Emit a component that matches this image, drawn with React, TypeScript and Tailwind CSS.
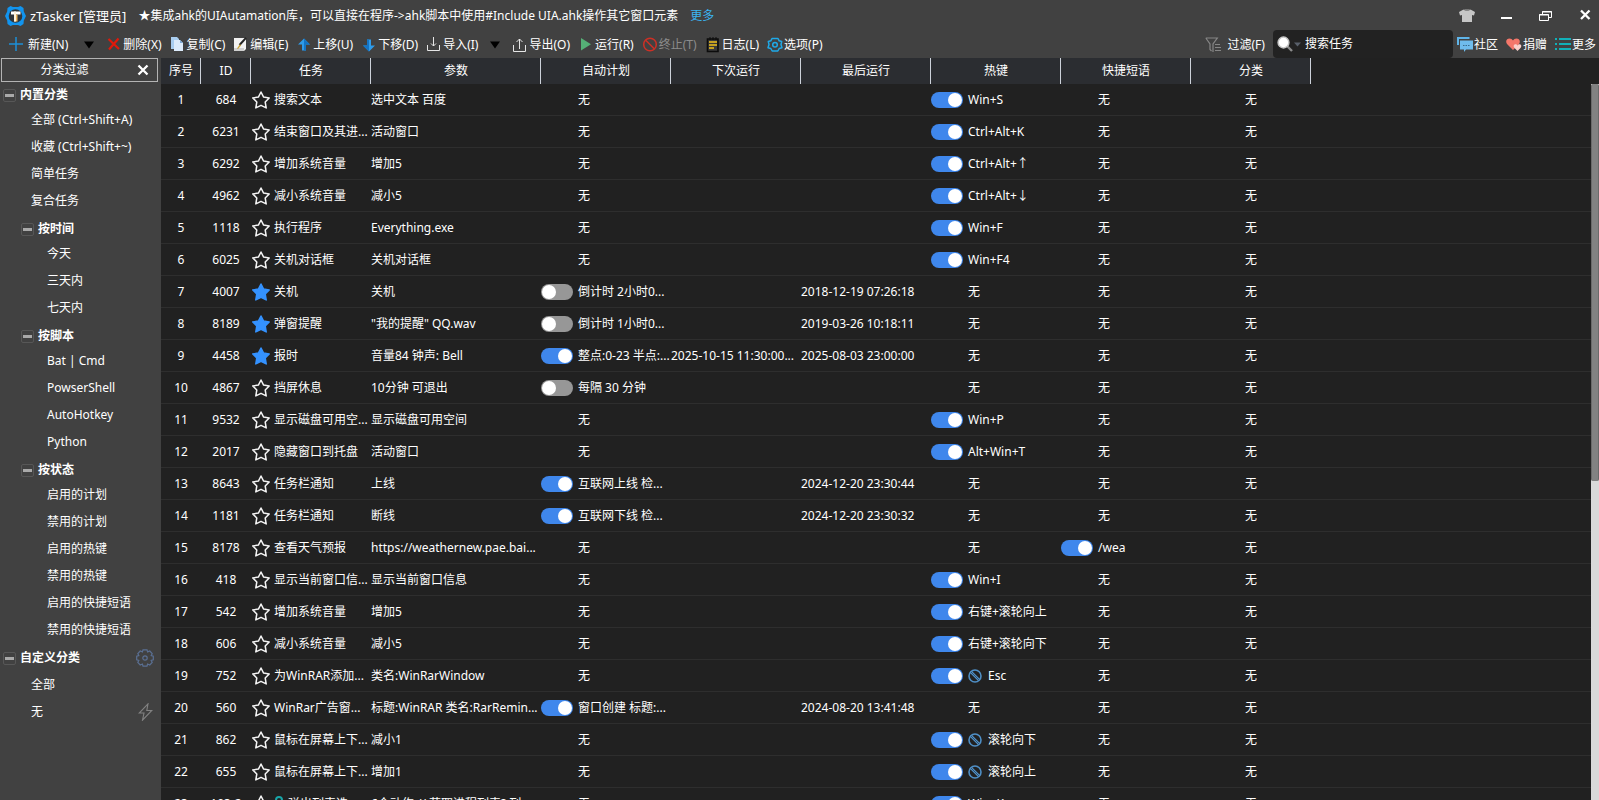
import { useState } from 'react';
import type { ReactNode } from 'react';

type Cell = string | { on: boolean; text: string; blocked?: boolean };

interface Task {
	id: string;
	name: string;
	params: string;
	fav?: boolean;
	locked?: boolean;
	plan?: Cell;
	next?: string;
	last?: string;
	hotkey?: Cell;
	phrase?: Cell;
}

const on = (text: string, blocked = false): Cell => ({ on: true, text, blocked });
const off = (text: string): Cell => ({ on: false, text });

const TASKS: Task[] = [
	{ id: '684', name: '搜索文本', params: '选中文本 百度', hotkey: on('Win+S') },
	{ id: '6231', name: '结束窗口及其进...', params: '活动窗口', hotkey: on('Ctrl+Alt+K') },
	{ id: '6292', name: '增加系统音量', params: '增加5', hotkey: on('Ctrl+Alt+↑') },
	{ id: '4962', name: '减小系统音量', params: '减小5', hotkey: on('Ctrl+Alt+↓') },
	{ id: '1118', name: '执行程序', params: 'Everything.exe', hotkey: on('Win+F') },
	{ id: '6025', name: '关机对话框', params: '关机对话框', hotkey: on('Win+F4') },
	{ id: '4007', name: '关机', params: '关机', fav: true, plan: off('倒计时 2小时0...'), last: '2018-12-19 07:26:18' },
	{ id: '8189', name: '弹窗提醒', params: '"我的提醒" QQ.wav', fav: true, plan: off('倒计时 1小时0...'), last: '2019-03-26 10:18:11' },
	{ id: '4458', name: '报时', params: '音量84 钟声: Bell', fav: true, plan: on('整点:0-23 半点:...'), next: '2025-10-15 11:30:00...', last: '2025-08-03 23:00:00' },
	{ id: '4867', name: '挡屏休息', params: '10分钟 可退出', plan: off('每隔 30 分钟') },
	{ id: '9532', name: '显示磁盘可用空...', params: '显示磁盘可用空间', hotkey: on('Win+P') },
	{ id: '2017', name: '隐藏窗口到托盘', params: '活动窗口', hotkey: on('Alt+Win+T') },
	{ id: '8643', name: '任务栏通知', params: '上线', plan: on('互联网上线 检...'), last: '2024-12-20 23:30:44' },
	{ id: '1181', name: '任务栏通知', params: '断线', plan: on('互联网下线 检...'), last: '2024-12-20 23:30:32' },
	{ id: '8178', name: '查看天气预报', params: 'https://weathernew.pae.bai...', phrase: on('/wea') },
	{ id: '418', name: '显示当前窗口信...', params: '显示当前窗口信息', hotkey: on('Win+I') },
	{ id: '542', name: '增加系统音量', params: '增加5', hotkey: on('右键+滚轮向上') },
	{ id: '606', name: '减小系统音量', params: '减小5', hotkey: on('右键+滚轮向下') },
	{ id: '752', name: '为WinRAR添加...', params: '类名:WinRarWindow', hotkey: on('Esc', true) },
	{ id: '560', name: 'WinRar广告窗...', params: '标题:WinRAR 类名:RarRemin...', plan: on('窗口创建 标题:...'), last: '2024-08-20 13:41:48' },
	{ id: '862', name: '鼠标在屏幕上下...', params: '减小1', hotkey: on('滚轮向下', true) },
	{ id: '655', name: '鼠标在屏幕上下...', params: '增加1', hotkey: on('滚轮向上', true) },
	{ id: '103-2', name: '弹出列表选...', params: '6个动作 // 获取进程列表? 列...', locked: true, hotkey: on('Win+K') },
];

const COLUMNS = [
	{ label: '序号', width: 'w-10' },
	{ label: 'ID', width: 'w-[50px]' },
	{ label: '任务', width: 'w-[120px]' },
	{ label: '参数', width: 'w-[170px]' },
	{ label: '自动计划', width: 'w-[130px]' },
	{ label: '下次运行', width: 'w-[130px]' },
	{ label: '最后运行', width: 'w-[130px]' },
	{ label: '热键', width: 'w-[130px]' },
	{ label: '快捷短语', width: 'w-[130px]' },
	{ label: '分类', width: 'w-[120px]' },
];

const BUILTIN_GROUPS = [
	{ label: '按时间', items: ['今天', '三天内', '七天内'] },
	{ label: '按脚本', items: ['Bat | Cmd', 'PowserShell', 'AutoHotkey', 'Python'] },
	{ label: '按状态', items: ['启用的计划', '禁用的计划', '启用的热键', '禁用的热键', '启用的快捷短语', '禁用的快捷短语'] },
];

export default function App() {
	return (
		<div className="flex h-screen flex-col overflow-hidden bg-[#414141] font-['Noto_Sans','Noto_Sans_CJK_SC',sans-serif] text-xs leading-4 whitespace-nowrap text-white">
			<TitleBar />
			<Toolbar />
			<div className="flex min-h-0 flex-1">
				<Sidebar />
				<TaskList />
			</div>
		</div>
	);
}

function TitleBar() {
	return (
		<header className="flex h-[30px] shrink-0 items-center pt-0.5 pr-2 pl-[5px]">
			<LogoIcon />
			<h1 className="ml-1 text-[13px]">zTasker [管理员]</h1>
			<p className="ml-3">★集成ahk的UIAutamation库，可以直接在程序-&gt;ahk脚本中使用#Include UIA.ahk操作其它窗口元素</p>
			<a href="#more" className="ml-3 text-[#3bb4f2]">更多</a>
			<div className="ml-auto flex items-center gap-6">
				<button aria-label="换肤">
					<svg width="16" height="14" viewBox="0 0 16 14" fill="#c6c6c6">
						<path d="M4.5.5 0 3l1 3.500 2-.5V13h10V6l2 .5L16 3 11.500.5C10.500 2 5.500 2 4.500.5Z" />
						<path d="M5 .3h6C10 2.500 6 2.500 5 .3Z" fill="#8b8b8b" />
					</svg>
				</button>
				<button aria-label="最小化">
					<svg width="16" height="14" viewBox="0 0 16 14"><path d="M2 8h11v2H2z" fill="#fff" /></svg>
				</button>
				<button aria-label="还原">
					<svg width="14" height="14" viewBox="0 0 14 14" fill="none" stroke="#fff">
						<path d="M3.500 5V2.500h9v6H10M3 3h10M.5 5.500h9v6h-9zM0 6h10" />
					</svg>
				</button>
				<button aria-label="关闭">
					<svg width="14" height="14" viewBox="0 0 14 14" stroke="#fff" strokeWidth="2.300"><path d="m4 1.500 8.500 8.500M12.500 1.500 4 10" /></svg>
				</button>
			</div>
		</header>
	);
}

function Tool({ icon, children, disabled }: { icon: ReactNode; children: ReactNode; disabled?: boolean }) {
	return (
		<button disabled={disabled} className="flex items-center gap-px disabled:text-[#8c8c8c]">
			{icon}
			{children}
		</button>
	);
}

function DropArrow({ label, tight }: { label: string; tight?: boolean }) {
	return (
		<button aria-label={label} className={tight ? 'px-1' : 'pr-1 pl-2'}>
			<svg width="10" height="8" viewBox="0 0 10 8"><path d="M0 .5h10L5 7.500z" fill="#000" /></svg>
		</button>
	);
}

function Toolbar() {
	return (
		<div className="flex h-7 shrink-0 items-center pr-[3px] pl-2">
			<div className="flex items-center gap-2 pt-0.5">
				<Tool
					icon={
						<svg width="19" height="16" viewBox="0 0 19 16" stroke="#1c8fd6" strokeWidth="1.500"><path d="M8 0v14M1 7h14" /></svg>
					}
				>
					新建(N)
				</Tool>
				<DropArrow label="新建菜单" />
				<Tool
					icon={
						<svg width="16" height="16" viewBox="0 0 16 16" stroke="#e0190b" strokeWidth="2.200"><path d="m2.500 2 10.500 10M12.500 1.500 3 12.500" /></svg>
					}
				>
					删除(X)
				</Tool>
				<Tool
					icon={
						<svg width="16" height="16" viewBox="0 0 16 16">
							<path d="M1 0h6l2 2v10H1z" fill="#a9cdf0" />
							<path d="M4 3h6l3 3v8H4z" fill="#dcebfb" />
							<path d="M10 3v3h3z" fill="#7fa9d6" />
						</svg>
					}
				>
					复制(C)
				</Tool>
				<Tool
					icon={
						<svg width="16" height="16" viewBox="0 0 16 16">
							<path d="M1 1h12v11l-2 2H1z" fill="#f2f2f2" />
							<path d="M1 11h10v3H1z" fill="#cfcfcf" />
							<path d="M13 .8 6.500 8" stroke="#222" strokeWidth="2" />
							<path d="m7 7-3 4.500 1 .5 3-3.500" fill="#c8a23a" />
						</svg>
					}
				>
					编辑(E)
				</Tool>
				<Tool icon={<ArrowIcon />}>上移(U)</Tool>
				<Tool icon={<ArrowIcon down />}>下移(D)</Tool>
				<Tool
					icon={
						<svg width="16" height="16" viewBox="0 0 16 16" fill="none" stroke="#e6e6e6"><path d="M1.500 8v5.500h12V8M7.500 0v9M5 6.500 7.500 9 10 6.500" /></svg>
					}
				>
					导入(I)
				</Tool>
				<DropArrow label="导入菜单" tight />
				<Tool
					icon={
						<svg width="16" height="16" viewBox="0 0 16 16" fill="none" stroke="#e6e6e6"><path d="M1.500 8v6.500h12V8M7.500 12V2M4.500 5l3-3 3 3" /></svg>
					}
				>
					导出(O)
				</Tool>
				<Tool
					icon={
						<svg width="16" height="16" viewBox="0 0 16 16"><path d="M3 1 13 7.300 3 13.500z" fill="#55b076" /></svg>
					}
				>
					运行(R)
				</Tool>
				<Tool
					disabled
					icon={
						<svg width="16" height="16" viewBox="0 0 16 16" fill="none" stroke="#cc3026" strokeWidth="1.500">
							<circle cx="8" cy="7.500" r="6.300" />
							<path d="m3.500 3 9 9" />
						</svg>
					}
				>
					终止(T)
				</Tool>
				<Tool
					icon={
						<svg width="16" height="16" viewBox="0 0 16 16">
							<path d="M2.500 2h10.500v12.500H2.500z" fill="#3a3a3a" stroke="#0c0c0c" strokeWidth="1.600" />
							<path d="M5 0v3M8 0v3M11 0v3" stroke="#0c0c0c" />
							<path d="M4 5h8M4 8h8M4 11h5" stroke="#f2c21a" strokeWidth="1.400" />
						</svg>
					}
				>
					日志(L)
				</Tool>
				<Tool
					icon={
						<svg width="16" height="16" viewBox="0 0 16 16" fill="none" stroke="#1fa9e8" strokeWidth="1.500" strokeLinejoin="round">
							<path d="M5 1.500h6l1.200 2.300 2.500.7L14 7.500l1 3.200-2.800.8-1.400 2.500H5.200l-1.400-2.500L1 10.700l1-3.200-.7-3 2.500-.7z" />
							<circle cx="8" cy="7.700" r="2.300" />
						</svg>
					}
				>
					选项(P)
				</Tool>
			</div>

			<div className="ml-auto flex h-full items-center">
				<button className="flex items-center gap-1.5 pt-0.5">
					<svg width="17" height="16" viewBox="0 0 17 16" fill="none" stroke="#868686" strokeWidth="1.200">
						<path d="M.8 1h11.500L8 7v8M.8 1 5 7v5.500l1.500 1.500M10 7.500h5M10 10.500h6M10 13.500h6" />
					</svg>
					过滤(F)
				</button>
				<div className="ml-2 flex h-full w-[180px] items-center rounded bg-[#222] pl-1">
					<svg width="16" height="16" viewBox="0 0 16 16">
						<path d="m10 10 5 5" stroke="#8c8c8c" strokeWidth="2.400" />
						<circle cx="6.500" cy="6.500" r="5.400" fill="#fff" stroke="#c6c6c6" strokeWidth="1.500" />
					</svg>
					<svg width="7" height="5" viewBox="0 0 7 5" className="ml-px"><path d="M0 .5h7l-3.500 4z" fill="#59606b" /></svg>
					<input aria-label="搜索任务" placeholder="搜索任务" className="ml-1 min-w-0 flex-1 bg-transparent outline-none placeholder:text-white" />
				</div>
				<div className="ml-1 flex gap-2 pt-0.5">
					<Tool
						icon={
							<svg width="16" height="16" viewBox="0 0 16 16">
								<path d="M1 8V1h11.500" fill="none" stroke="#5fb4e8" strokeWidth="2" />
								<path d="M3 3.500h13v9H9L7 15v-2.500H3z" fill="#6fbcec" />
								<path d="M6 8.500h7" stroke="#3b6a8a" strokeDasharray="1.500 1" />
							</svg>
						}
					>
						社区
					</Tool>
					<Tool
						icon={
							<svg width="16" height="16" viewBox="0 0 16 16">
								<path d="M7 13 1 7C-1 4 1 1.500 3.500 1.500c1.600 0 2.700.8 3.500 2 .8-1.200 1.900-2 3.500-2C13 1.500 15 4 13 7z" fill="#f4776a" />
								<path d="m11.500 14-3.200-3.200C7 9 8 7.300 9.500 7.300c.9 0 1.500.5 2 1.200.5-.7 1.100-1.200 2-1.200 1.500 0 2.500 1.700 1.200 3.500z" fill="#fbd0ca" />
							</svg>
						}
					>
						捐赠
					</Tool>
					<Tool
						icon={
							<svg width="16" height="16" viewBox="0 0 16 16" stroke="#12b0b8" strokeWidth="2"><path d="M0 2h2M4 2h12M0 7h2M4 7h12M0 12h2M4 12h12" /></svg>
						}
					>
						更多
					</Tool>
				</div>
			</div>
		</div>
	);
}

function Heading({ label, nested, children }: { label: string; nested?: boolean; children?: ReactNode }) {
	return (
		<div className={`flex h-[26px] items-center font-bold ${nested ? 'pl-[21px]' : 'pl-[3px]'}`}>
			<button aria-label={`折叠 ${label}`} className="flex size-[13px] items-center justify-center rounded-[2px] border border-[#575757]">
				<span className="h-[3px] w-[9px] bg-[#a9a9a9]" />
			</button>
			<span className="ml-1">{label}</span>
			{children}
		</div>
	);
}

function Item({ label, nested, children }: { label: string; nested?: boolean; children?: ReactNode }) {
	return (
		<li className={`flex h-[27px] items-center ${nested ? 'pl-[47px]' : 'pl-[31px]'}`}>
			<a href="#filter">{label}</a>
			{children}
		</li>
	);
}

function Sidebar() {
	return (
		<aside className="w-[161px] shrink-0 overflow-hidden">
			<div className="mr-[3px] ml-px flex h-6 items-center border border-[#b4b4b4]">
				<span className="flex-1 pr-2.5 text-center">分类过滤</span>
				<button aria-label="关闭分类过滤" className="mr-2">
					<svg width="12" height="12" viewBox="0 0 12 12" stroke="#fff" strokeWidth="2.300"><path d="m1.500 1.500 9 9M10.500 1.500l-9 9" /></svg>
				</button>
			</div>

			<nav>
				<Heading label="内置分类" />
				<ul className="-mt-0.5 mb-0.5">
					<Item label="全部 (Ctrl+Shift+A)" />
					<Item label="收藏 (Ctrl+Shift+~)" />
					<Item label="简单任务" />
					<Item label="复合任务" />
				</ul>
				{BUILTIN_GROUPS.map((group) => (
					<div key={group.label}>
						<Heading label={group.label} nested />
						<ul className="-mt-0.5 mb-0.5">
							{group.items.map((item) => (
								<Item key={item} label={item} nested />
							))}
						</ul>
					</div>
				))}
				<Heading label="自定义分类">
					<button aria-label="分类设置" className="mr-[7px] ml-auto">
						<svg width="18" height="18" viewBox="0 0 18 18" fill="none" stroke="#5a6f92" strokeWidth="1.200">
							<path d="M7 .8h4l.6 2.100L13.800 2l2.400 2.600-1 2 2.100.6v3.600l-2.100.6 1 2-2.400 2.600-2.200-1-.6 2.200H7l-.6-2.200-2.200 1-2.400-2.600 1-2-2.100-.6V7.200l2.100-.6-1-2L4.200 2l2.200.9z" />
							<circle cx="9" cy="9" r="2.200" />
						</svg>
					</button>
				</Heading>
				<ul>
					<Item label="全部" />
					<Item label="无">
						<button aria-label="快速分类" className="mr-2 ml-auto">
							<svg width="15" height="18" viewBox="0 0 15 18" fill="none" stroke="#828282" strokeWidth="1.100"><path d="M10 .8 1.200 10H6l-1.500 7.200L13.800 7.500H8.800z" /></svg>
						</button>
					</Item>
				</ul>
			</nav>
		</aside>
	);
}

function TaskList() {
	return (
		<main className="flex min-w-0 flex-1 bg-[#212121]">
			<div className="min-w-0 flex-1 overflow-hidden">
				<table className="w-full table-fixed border-collapse">
					<colgroup>
						{COLUMNS.map((col) => (
							<col key={col.label} className={col.width} />
						))}
						<col />
					</colgroup>
					<thead>
						<tr className="h-[26px]">
							{COLUMNS.map((col) => (
								<th key={col.label} className="bg-[#2b2d31] p-0 font-normal shadow-[inset_-1px_0_0_#cdd2da]">
									{col.label}
								</th>
							))}
							<td />
						</tr>
					</thead>
					<tbody>
						{TASKS.map((task, i) => (
							<TaskRow key={task.id} task={task} index={i + 1} />
						))}
					</tbody>
				</table>
			</div>
			<div className="mt-[26px] w-2 shrink-0 bg-[#d9d9d9]">
				<div className="h-[397px] rounded-xs border-x border-[#6a6a6a] bg-[#828282]" />
			</div>
		</main>
	);
}

function TaskRow({ task, index }: { task: Task; index: number }) {
	const [fav, setFav] = useState(!!task.fav);

	return (
		<tr className="h-8 shadow-[inset_0_-1px_0_#2e2e2e]">
			<td className="p-0 text-center">{index}</td>
			<td className="p-0 text-center">{task.id}</td>
			<td className="p-0">
				<div className="flex items-center overflow-hidden pl-px">
					<button aria-label={`收藏 ${task.name}`} aria-pressed={fav} onClick={() => setFav(!fav)} className="mr-1 shrink-0">
						<StarIcon filled={fav} />
					</button>
					{task.locked && <LockIcon />}
					{task.name}
				</div>
			</td>
			<td className="overflow-hidden p-0">{task.params}</td>
			<td className="p-0">
				<SwitchCell cell={task.plan} label={`自动计划 ${task.name}`} />
			</td>
			<td className="p-0">{task.next}</td>
			<td className="p-0">{task.last}</td>
			<td className="p-0">
				<SwitchCell cell={task.hotkey} label={`热键 ${task.name}`} />
			</td>
			<td className="p-0">
				<SwitchCell cell={task.phrase} label={`快捷短语 ${task.name}`} />
			</td>
			<td className="p-0 text-center">无</td>
			<td />
		</tr>
	);
}

function SwitchCell({ cell = '无', label }: { cell?: Cell; label: string }) {
	if (typeof cell === 'string') return <div className="pl-[37px]">{cell}</div>;
	return (
		<div className="flex items-center">
			<input
				type="checkbox"
				role="switch"
				aria-label={label}
				defaultChecked={cell.on}
				className="mr-[5px] flex h-4 w-8 shrink-0 appearance-none items-center rounded-full bg-[#979797] px-px before:size-3.5 before:rounded-full before:bg-white checked:bg-[#3f87ec] checked:before:ml-auto"
			/>
			{cell.blocked && (
				<svg width="14" height="14" viewBox="0 0 14 14" fill="none" className="mr-1.5 shrink-0">
					<circle cx="7" cy="7" r="6" stroke="#4f8fc6" strokeWidth="1.600" />
					<path d="m3 3 8 8" stroke="#4f8fc6" strokeWidth="2.600" />
					<path d="m3 3 8 8" stroke="#24384a" strokeWidth=".7" />
				</svg>
			)}
			{cell.text}
		</div>
	);
}

function StarIcon({ filled }: { filled: boolean }) {
	return (
		<svg width="18" height="18" viewBox="0 0 18 18" strokeWidth="1.500" strokeLinejoin="round" fill={filled ? '#3492ff' : 'none'} stroke={filled ? '#3492ff' : '#f4f4f4'}>
			<path d="m9 1 2.600 5.100 5.600.8-4 4.100 1 5.900L9 14.300l-5.200 2.600 1-5.900-4-4.100 5.600-.8z" />
		</svg>
	);
}

function LockIcon() {
	return (
		<svg width="10" height="16" viewBox="0 0 10 16" className="mr-1 shrink-0">
			<path d="M2 8V4a3 3 0 0 1 6 0v4" fill="none" stroke="#18a5a8" strokeWidth="2" />
			<path d="M0 7h10v8H0z" fill="#18a5a8" />
		</svg>
	);
}

function ArrowIcon({ down }: { down?: boolean }) {
	return (
		<svg width="16" height="16" viewBox="0 0 16 16" className={down ? 'rotate-180' : ''}>
			<path d="M8 1.500 2 7.500h4v6h4v-6h4z" fill="#2e9bea" />
			<path d="M8 1.500v12h2v-6h4z" fill="#1474c4" />
		</svg>
	);
}

function LogoIcon() {
	return (
		<svg width="21" height="22" viewBox="0 0 21 22">
			<path d="M5.500 1 8 2h5l2.500-1 3 2 .3 3.500L21 11l-2.200 4.500-.3 3.500-3 2-2.500-1H8l-2.500 1-3-2-.3-3.500L0 11l2.200-4.500.3-3.500z" fill="#1294ee" />
			<circle cx="10.500" cy="11" r="6.800" fill="#30363c" />
			<path d="M6 6.500h9.500v3H6z" fill="#fff" />
			<path d="M9 9.500h3.500v7H9z" fill="#f0b860" />
			<path d="M9 6.500h2v10H9z" fill="#fff3dc" />
		</svg>
	);
}
